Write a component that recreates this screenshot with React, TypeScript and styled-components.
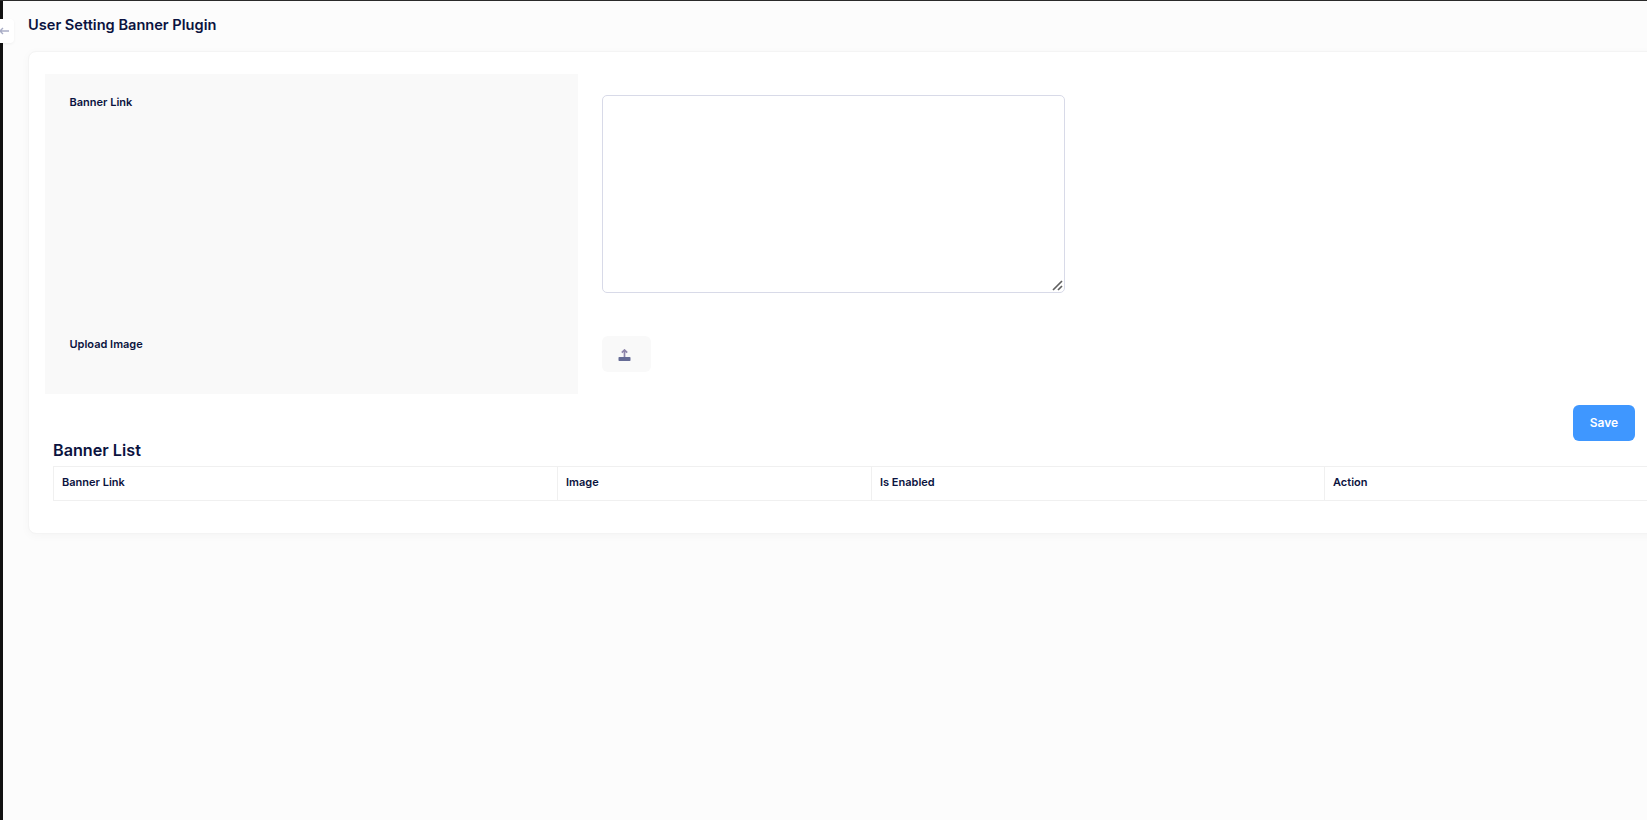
import styled, { createGlobalStyle } from 'styled-components';

const GlobalStyle = createGlobalStyle`
  html, body {
    margin: 0;
    height: 100%;
    overflow: hidden;
    background: #fcfcfc;
  }
  body {
    font-family: Inter, 'Liberation Sans', sans-serif;
    color: #0b1340;
  }
`;

const resizerIcon =
  "data:image/svg+xml,%3Csvg xmlns='http://www.w3.org/2000/svg' width='14' height='14'%3E%3Cpath d='M3 12 12 3M8 12l4-4' stroke='%23606060' stroke-width='1.7' fill='none'/%3E%3C/svg%3E";

const App = () => {
  return (
    <Shell>
      <GlobalStyle />
      <SideStrip />
      <CollapseButton aria-label='collapse'>
        <svg width='11' height='8' viewBox='0 0 11 8' fill='none'>
          <path d='M4 1 1 4l3 3M1 4h9' stroke='#a9adc6' strokeWidth='1.4' />
        </svg>
      </CollapseButton>
      <Main>
        <PageTitle>User Setting Banner Plugin</PageTitle>
        <Card>
          <FormGrid>
            <LabelCell $last={false}>Banner Link</LabelCell>
            <InputCell $last={false}>
              <LinkInput />
            </InputCell>
            <LabelCell $last>Upload Image</LabelCell>
            <InputCell $last>
              <UploadButton aria-label='upload'>
                <svg width='13' height='13' viewBox='0 0 13 13'>
                  <path d='M6.500 1v7M3.800 3.700 6.500 1l2.700 2.700' fill='none' stroke='#8f86ab' strokeWidth='1.700' />
                  <rect x='0.500' y='8' width='12' height='4' rx='0.800' fill='#666c96' />
                </svg>
              </UploadButton>
            </InputCell>
          </FormGrid>
          <SaveRow>
            <SaveButton>Save</SaveButton>
          </SaveRow>
          <ListTitle>Banner List</ListTitle>
          <BannerTable>
            <thead>
              <tr>
                <HeadCell $width={504}>Banner Link</HeadCell>
                <HeadCell $width={314}>Image</HeadCell>
                <HeadCell $width={453}>Is Enabled</HeadCell>
                <HeadCell $width={349}>Action</HeadCell>
              </tr>
            </thead>
          </BannerTable>
        </Card>
      </Main>
    </Shell>
  );
};

const Shell = styled.div`
  display: flex;
  min-height: 820px;
  position: relative;
  border-top: 1px solid #2a2a2a;
  box-sizing: border-box;
`;

const SideStrip = styled.div`
  flex: 0 0 3px;
  background: #111;
`;

const CollapseButton = styled.div`
  position: absolute;
  left: 0;
  top: 18px;
  width: 14px;
  height: 24px;
  display: flex;
  align-items: center;
  justify-content: flex-start;
  background: #fff;
  border-radius: 0 4px 4px 0;
  box-shadow: 0 1px 3px rgba(0, 0, 0, 0.05);

  svg {
    margin-left: -1px;
  }
`;

const Main = styled.main`
  flex: 1;
  min-width: 0;
  padding: 15px 0 0 25px;
`;

const PageTitle = styled.h1`
  margin: 0 0 16px;
  font-size: 14.6px;
  line-height: 19px;
  font-weight: 600;
`;

const Card = styled.section`
  width: 1640px;
  box-sizing: border-box;
  padding: 22px 0 32px 16px;
  background: #fff;
  border: 1px solid #f4f4f4;
  border-radius: 8px;
  box-shadow: 0 2px 10px rgba(0, 0, 0, 0.03);
`;

const FormGrid = styled.div`
  display: grid;
  grid-template-columns: 533px 1fr;
  grid-template-rows: 242px 78px;
`;

const LabelCell = styled.div<{ $last: boolean }>`
  background: #f9f9f9;
  padding: ${(p) => (p.$last ? '20.5px' : '21px')} 24px 0 24.5px;
  font-size: 11px;
  line-height: 14px;
  font-weight: 600;
`;

const InputCell = styled.div<{ $last: boolean }>`
  padding: ${(p) => (p.$last ? '20px' : '21px')} 0 0 24px;
`;

const LinkInput = styled.textarea`
  display: block;
  width: 463px;
  height: 198px;
  box-sizing: border-box;
  padding: 8px;
  background: #fff;
  border: 1px solid #d8dae8;
  border-radius: 5px;
  outline: none;

  &::-webkit-resizer {
    background: url("${resizerIcon}") no-repeat center;
  }
`;

const UploadButton = styled.div`
  width: 49px;
  height: 36px;
  display: flex;
  align-items: center;
  justify-content: center;
  background: #f9f9f9;
  border-radius: 6px;

  svg {
    margin: 2px 4px 0 0;
  }
`;

const SaveRow = styled.div`
  display: flex;
  justify-content: flex-end;
  width: 1590px;
  margin-top: 11px;
`;

const SaveButton = styled.button`
  width: 62px;
  height: 36px;
  padding: 0 0 1px;
  border: none;
  border-radius: 6px;
  background: #3f97ff;
  color: #fff;
  font-family: inherit;
  font-size: 12px;
  font-weight: 600;
`;

const ListTitle = styled.h2`
  margin: -1px 0 6px 8px;
  font-size: 16.2px;
  line-height: 20px;
  font-weight: 600;
`;

const BannerTable = styled.table`
  margin-left: 8px;
  width: 1620px;
  table-layout: fixed;
  border-collapse: collapse;
`;

const HeadCell = styled.th<{ $width: number }>`
  width: ${(p) => p.$width}px;
  height: 34px;
  padding: 0 8px 3px;
  box-sizing: border-box;
  border: 1px solid #f0f0f0;
  text-align: left;
  font-size: 11px;
  font-weight: 600;
`;

export default App;
